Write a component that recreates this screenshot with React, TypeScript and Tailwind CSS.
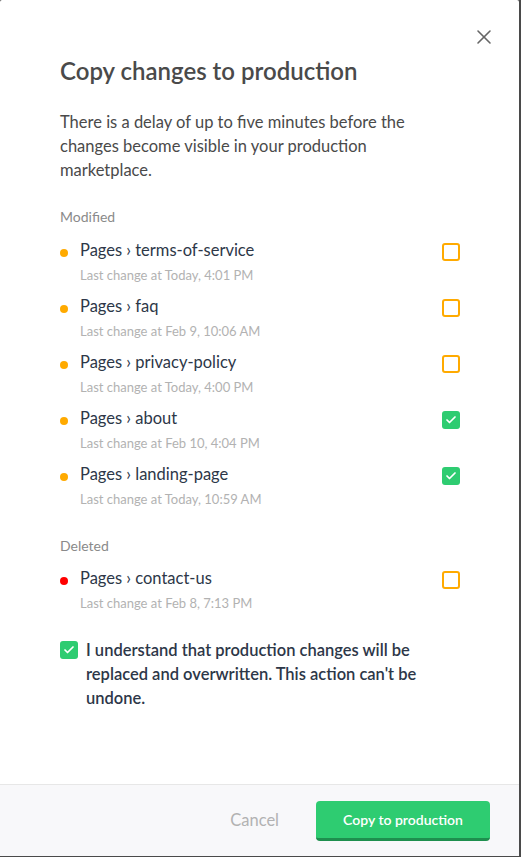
import { Check, X } from "lucide-react";

type Change = {
  path: string;
  when: string;
  checked: boolean;
};

const modified: Change[] = [
  { path: "terms-of-service", when: "Today, 4:01 PM", checked: false },
  { path: "faq", when: "Feb 9, 10:06 AM", checked: false },
  { path: "privacy-policy", when: "Today, 4:00 PM", checked: false },
  { path: "about", when: "Feb 10, 4:04 PM", checked: true },
  { path: "landing-page", when: "Today, 10:59 AM", checked: true },
];

const deleted: Change[] = [
  { path: "contact-us", when: "Feb 8, 7:13 PM", checked: false },
];

const Box = ({ checked }: { checked: boolean }) =>
  checked ? (
    <span className="flex size-[18px] items-center justify-center rounded-[3px] bg-[#2ecc71]">
      <Check className="size-3 text-white" strokeWidth={3.5} />
    </span>
  ) : (
    <span className="block size-[18px] rounded-[3px] border-2 border-[#ffaa00]" />
  );

const ChangeRow = ({ item, dot }: { item: Change; dot: string }) => (
  <div className="flex h-[56px] items-start">
    <div className="w-[20px] shrink-0 pt-[11px]">
      <span className={`block size-[8px] rounded-full ${dot}`} />
    </div>
    <div className="flex-1">
      <div className="text-[16.5px] leading-[24px] text-[#2d3748]">
        Pages › {item.path}
      </div>
      <div className="mt-[4px] text-[13px] leading-[18px] text-[#b2b2b2]">
        Last change at {item.when}
      </div>
    </div>
    <div className="-mr-[1px] pt-[5px]">
      <Box checked={item.checked} />
    </div>
  </div>
);

export default function App() {
  return (
    <div className="h-[857px] w-[521px] bg-[#4a4a4a] font-['Lato',sans-serif]">
      <div className="flex h-[856px] w-[519px] flex-col overflow-hidden rounded-t-[2px] bg-white">
        <div className="flex-1 px-[60px]">
          <div className="flex justify-end pt-[25px]">
            <button className="-mr-[37px] text-[#666666]">
              <X className="size-[24px]" strokeWidth={1.6} />
            </button>
          </div>
          <h1 className="mt-[6px] text-[24px] font-semibold leading-[32px] text-[#4a4a4a]">
            Copy changes to production
          </h1>
          <p className="mt-[23px] w-[370px] text-[16.5px] leading-[24px] text-[#4a4a4a]">
            There is a delay of up to five minutes before the changes become
            visible in your production marketplace.
          </p>

          <div className="mt-[23px] text-[14px] leading-[24px] text-[#8a8a8a]">
            Modified
          </div>
          <div className="mt-[9px]">
            {modified.map((m) => (
              <ChangeRow key={m.path} item={m} dot="bg-[#ffaa00]" />
            ))}
          </div>

          <div className="mt-[16px] text-[14px] leading-[24px] text-[#8a8a8a]">
            Deleted
          </div>
          <div className="mt-[8px]">
            {deleted.map((m) => (
              <ChangeRow key={m.path} item={m} dot="bg-[#ff0000]" />
            ))}
          </div>

          <label className="mt-[16px] flex items-start gap-[8px]">
            <span className="pt-[3px]">
              <Box checked />
            </span>
            <span className="text-[16.5px] font-semibold leading-[24px] text-[#2d3748]">
              I understand that production changes will be replaced and
              overwritten. This action can't be undone.
            </span>
          </label>
        </div>

        <div className="flex h-[72px] items-center justify-end gap-[37px] border-t border-[#e7e7e7] bg-[#f8f8fa] pr-[29px]">
          <button className="text-[16.5px] text-[#b2b2b2]">Cancel</button>
          <button className="h-[40px] w-[174px] rounded-[4px] border-b-[3px] border-[#1e8f4e] bg-[#2ecc71] text-[14px] font-semibold text-white">
            Copy to production
          </button>
        </div>
      </div>
    </div>
  );
}
